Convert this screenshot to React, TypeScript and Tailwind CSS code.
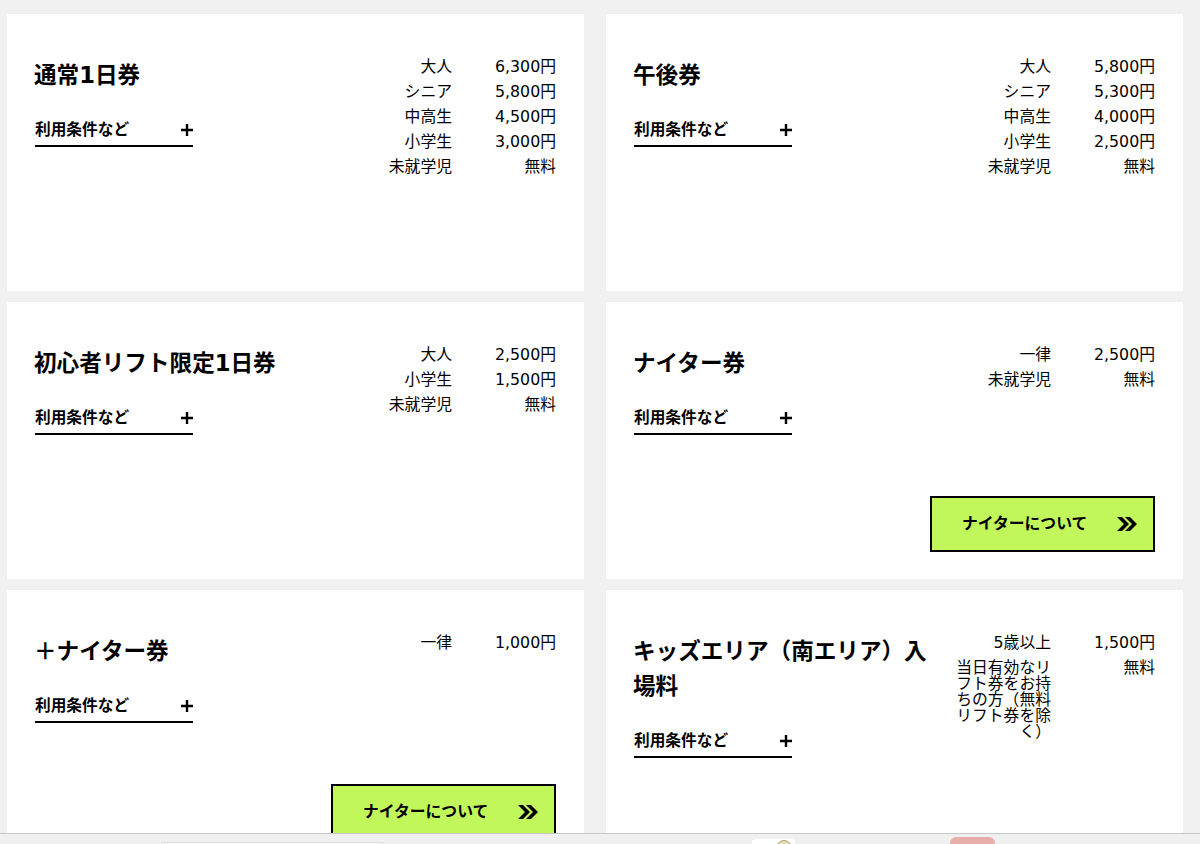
import React from "react";

type Price = { label: string; value: string };
type Ticket = { title: string; prices: Price[]; button?: boolean };

const tickets: Ticket[] = [
  {
    title: "通常1日券",
    prices: [
      { label: "大人", value: "6,300円" },
      { label: "シニア", value: "5,800円" },
      { label: "中高生", value: "4,500円" },
      { label: "小学生", value: "3,000円" },
      { label: "未就学児", value: "無料" },
    ],
  },
  {
    title: "午後券",
    prices: [
      { label: "大人", value: "5,800円" },
      { label: "シニア", value: "5,300円" },
      { label: "中高生", value: "4,000円" },
      { label: "小学生", value: "2,500円" },
      { label: "未就学児", value: "無料" },
    ],
  },
  {
    title: "初心者リフト限定1日券",
    prices: [
      { label: "大人", value: "2,500円" },
      { label: "小学生", value: "1,500円" },
      { label: "未就学児", value: "無料" },
    ],
  },
  {
    title: "ナイター券",
    prices: [
      { label: "一律", value: "2,500円" },
      { label: "未就学児", value: "無料" },
    ],
    button: true,
  },
  {
    title: "＋ナイター券",
    prices: [{ label: "一律", value: "1,000円" }],
    button: true,
  },
  {
    title: "キッズエリア（南エリア）入場料",
    prices: [
      { label: "5歳以上", value: "1,500円" },
      { label: "当日有効なリフト券をお持ちの方（無料リフト券を除く）", value: "無料" },
    ],
  },
];

const PlusIcon = () => (
  <svg width="12" height="12" viewBox="0 0 12 12" className="shrink-0">
    <path d="M0 6h12M6 0v12" stroke="#000" strokeWidth="2.4" fill="none" />
  </svg>
);

const ArrowsIcon = () => (
  <svg width="20" height="14" viewBox="0 0 20 14" className="shrink-0">
    <path
      d="M0 0h5l7 7-7 7H0l7-7zM8 0h5l7 7-7 7H8l7-7z"
      fill="#000"
    />
  </svg>
);

const TicketCard = ({ ticket }: { ticket: Ticket }) => {
  return (
    <div className="h-[277px] bg-white pt-[44px] pb-[27px] pl-[27px] pr-[28px] flex">
      <div className="flex-1 min-w-0">
        <h2 className="text-[22.6px] leading-[35px] font-bold text-black">{ticket.title}</h2>
        <div className="mt-[20px] ml-px w-[158px] h-[34px] border-b-2 border-black flex items-center justify-between pt-[2px]">
          <span className="text-[15.7px] font-bold text-black">利用条件など</span>
          <PlusIcon />
        </div>
      </div>
      <div className="w-[225px] shrink-0 flex flex-col">
        <div className="flex-1 pt-px">
          {ticket.prices.map((price) => (
            <div key={price.label} className="flex text-[15.8px] leading-[16px] pb-[9px] text-black">
              <div className="w-[121px] pl-[24px] text-right">{price.label}</div>
              <div className="w-[104px] text-right">{price.value}</div>
            </div>
          ))}
        </div>
        {ticket.button && (
          <div className="h-[56px] shrink-0 border-2 border-black bg-[#c2f75b] flex items-center justify-between pl-[30px] pr-[16px]">
            <span className="text-[15.8px] font-bold text-black">ナイターについて</span>
            <ArrowsIcon />
          </div>
        )}
      </div>
    </div>
  );
};

const App = () => {
  return (
    <div
      className="relative h-screen overflow-hidden bg-[#f1f1f1]"
      style={{ fontFamily: '"DejaVu Sans", "Noto Sans CJK JP", sans-serif' }}
    >
      <div className="grid grid-cols-[577px_577px] gap-x-[22px] gap-y-[11px] pt-[14px] pl-[7px]">
        {tickets.map((ticket) => (
          <TicketCard key={ticket.title} ticket={ticket} />
        ))}
      </div>

      {/* bar along the bottom edge, it sits over the cards */}
      <div className="absolute left-0 right-0 bottom-0 h-[11px] bg-[#f0f0f0] border-t border-[#c8c8c8] overflow-hidden">
        <div className="absolute left-[160px] top-[8px] w-[225px] h-[6px] bg-[#f6f6f6] rounded-t border border-[#dddddd]" />
        <div className="absolute left-[752px] top-[5px] w-[43px] h-[8px] bg-white rounded-t" />
        <div className="absolute left-[776px] top-[6px] w-[16px] h-[16px] rounded-full bg-[#e6dfb4] border border-[#a8a27a]" />
        <div className="absolute left-[950px] top-[3px] w-[45px] h-[10px] bg-[#e8aeaa] rounded-t-md" />
      </div>
    </div>
  );
};

export default App;
